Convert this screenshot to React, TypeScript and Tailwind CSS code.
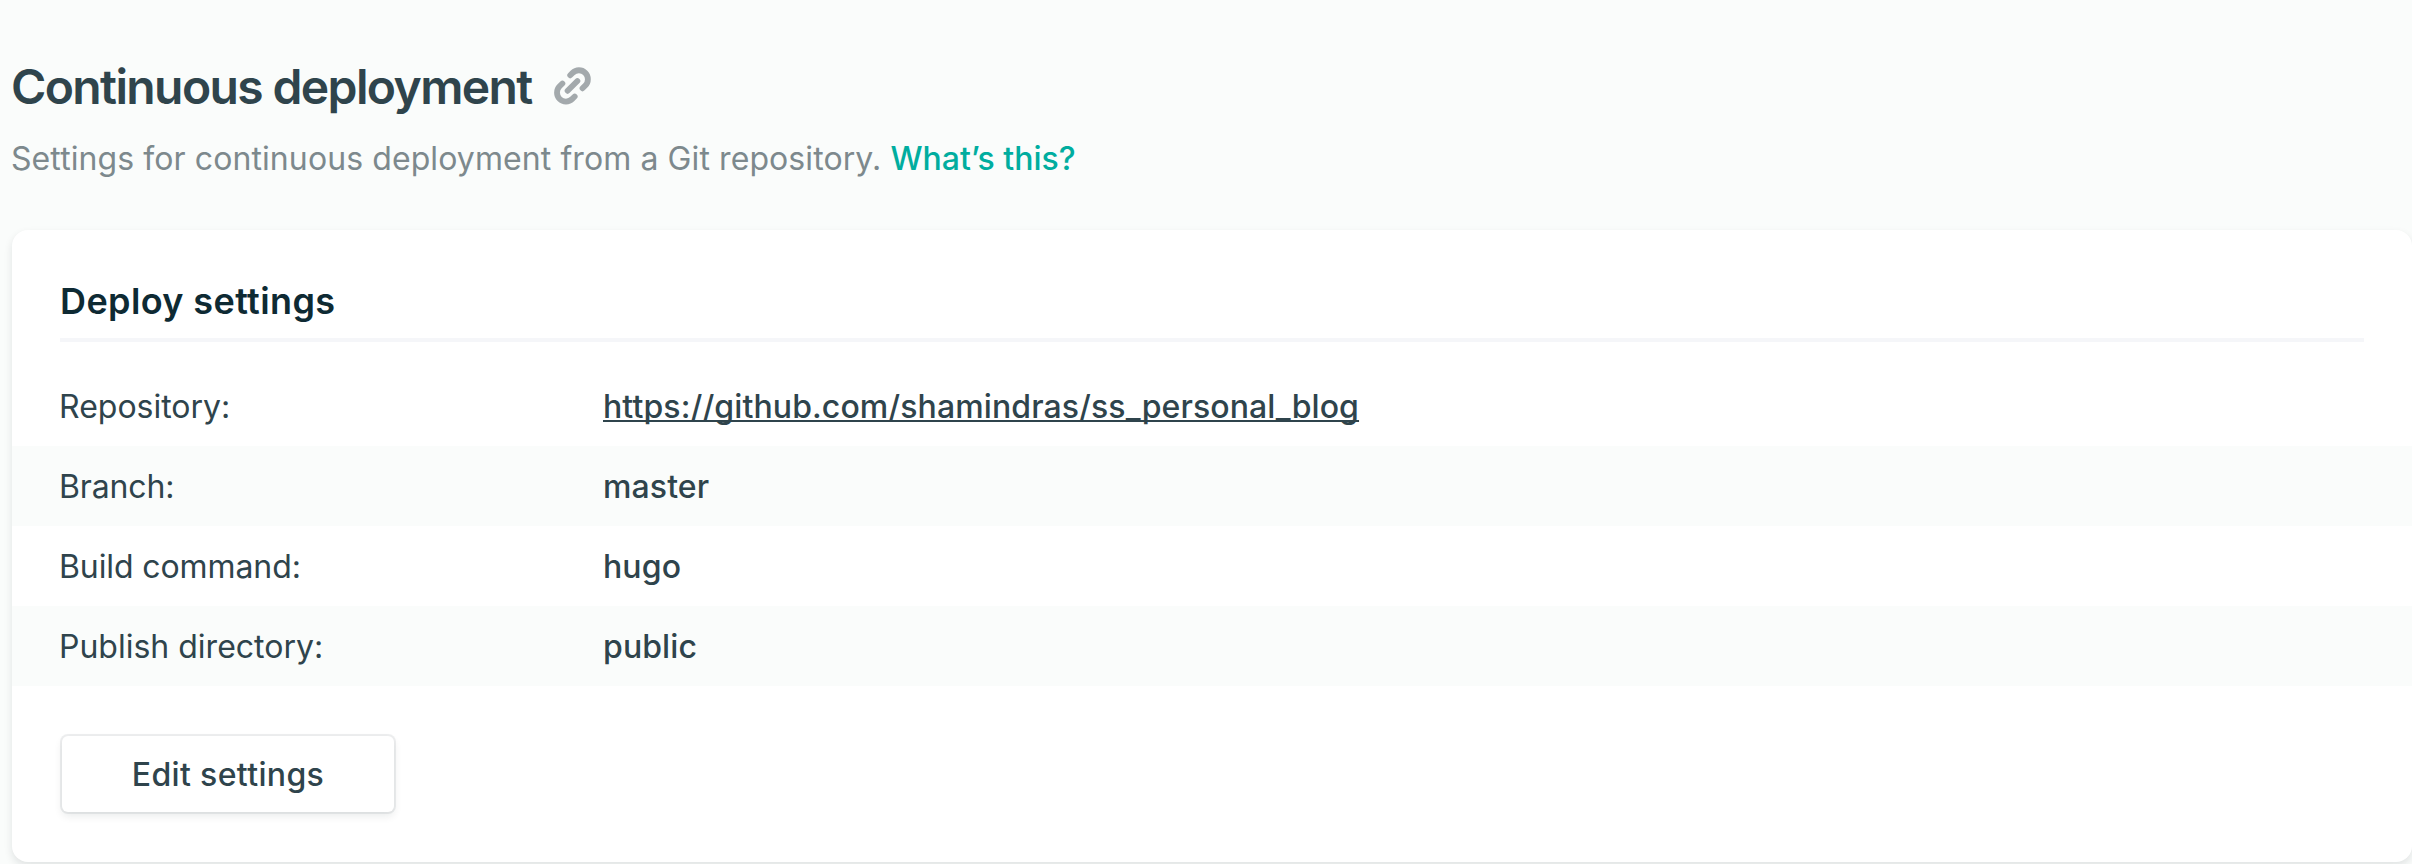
type Row = { label: string; value: string; link?: boolean; tracking: string };

const rows: Row[] = [
  { label: "Repository:", value: "https://github.com/shamindras/ss_personal_blog", link: true, tracking: "tracking-normal" },
  { label: "Branch:", value: "master", tracking: "tracking-[-0.15px]" },
  { label: "Build command:", value: "hugo", tracking: "tracking-[-0.1px]" },
  { label: "Publish directory:", value: "public", tracking: "tracking-normal" },
];

function LinkIcon() {
  return (
    <svg width="38" height="44" viewBox="0 0 38 44" fill="none" stroke="#a3a9ac" strokeWidth="5.8" strokeLinecap="round">
      <path d="M16.2 9.3 L18.6 6.9 A8.9 8.9 0 0 1 31.3 19.5 L28.5 22.3" />
      <path d="M8.4 17.5 L5.6 20.3 A8.9 8.9 0 0 0 18.3 32.9 L20.7 30.5" />
      <path d="M13.6 24.8 L23.4 15" />
    </svg>
  );
}

export default function App() {
  return (
    <div className="h-[864px] w-full overflow-hidden bg-[#fafcfb] pl-3 pt-[60px] font-['Inter',sans-serif] text-[32px] leading-[48px] text-[#2f444c]">
      <header>
        <div className="-ml-px flex h-[56px] items-center gap-[22px]">
          <h1 className="pb-[3px] text-[48px] font-semibold leading-[56px] tracking-[-1.62px]">
            Continuous deployment
          </h1>
          <LinkIcon />
        </div>
        <p className="-ml-px mt-[19px] tracking-[0.09px] text-[#7d898d]">
          Settings for continuous deployment from a Git repository.{" "}
          <a className="font-medium tracking-normal text-[#00ad9f]">What’s this?</a>
        </p>
      </header>

      <section className="mt-[47px] h-[632px] rounded-2xl bg-white shadow-[0_4px_8px_rgba(14,30,37,0.11)]">
        <h2 className="mx-12 h-[112px] border-b-4 border-[#f5f6f9] pt-[47px] text-[36px] font-semibold tracking-[0.38px] text-[#0e2a33]">
          Deploy settings
        </h2>
        <dl className="mt-6">
          {rows.map((row) => (
            <div key={row.label} className="flex h-20 items-center pl-[47px] pt-[2px] even:bg-[#fafcfb]">
              <dt className={`w-[544px] ${row.tracking}`}>{row.label}</dt>
              <dd className="font-medium tracking-[0.1px]">
                {row.link ? (
                  <a className="underline decoration-2 underline-offset-2 [text-decoration-skip-ink:none]">{row.value}</a>
                ) : (
                  row.value
                )}
              </dd>
            </div>
          ))}
        </dl>
        <button className="ml-[50px] mt-[50px] h-[76px] w-[332px] rounded-md bg-white pt-[2px] font-medium tracking-[0.35px] shadow-[0_0_0_2px_rgba(14,30,37,0.07),0_4px_8px_rgba(14,30,37,0.09)]">
          Edit settings
        </button>
      </section>
    </div>
  );
}
